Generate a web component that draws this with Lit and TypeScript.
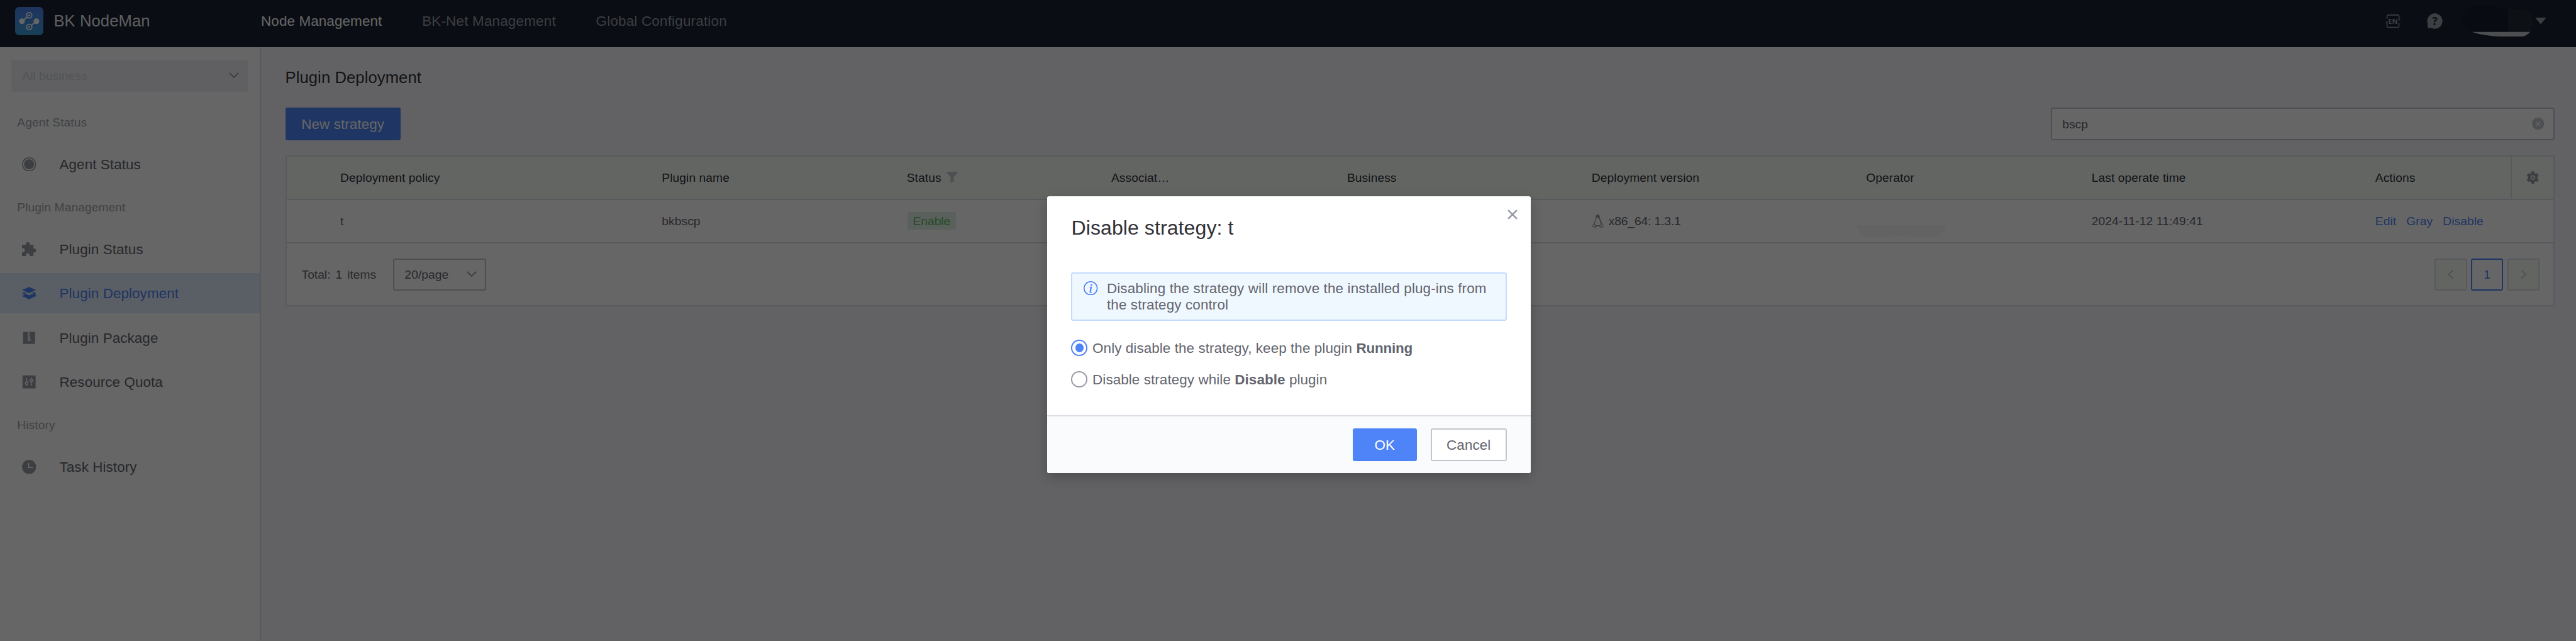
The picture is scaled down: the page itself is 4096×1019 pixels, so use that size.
import { LitElement, html, css, unsafeCSS } from "lit";
import type { TemplateResult } from "lit";
import { customElement } from "lit/decorators.js";

/** Design units are CSS pixels of a 2556px wide layout, enlarged for the wide screen. */
const K = 4096 / 2556;
const u = (n: number) => unsafeCSS(`${+(n * K).toFixed(3)}px`);

const icons = {
  logo: html`<svg viewBox="0 0 28 28"><defs><linearGradient id="lg" x1="0" y1="0" x2="0" y2="1"><stop offset="0" stop-color="#4d82ee"/><stop offset="1" stop-color="#3e9fd8"/></linearGradient></defs><rect width="28" height="28" rx="4" fill="url(#lg)"/><g fill="none" stroke="#fff" stroke-width="1.1"><path d="M7 14.2 12.3 9.8M21 14.2 15.8 18.6" stroke-width="1.3"/><circle cx="14" cy="8.3" r="2.7"/><circle cx="14" cy="20" r="2.7"/></g><g fill="#fff"><circle cx="6.8" cy="14.2" r="2.8"/><circle cx="21.2" cy="14.2" r="2.8"/><circle cx="14" cy="8.3" r="1"/><circle cx="14" cy="20" r="1"/></g></svg>`,
  agent: html`<svg viewBox="0 0 14 14"><circle cx="7" cy="7" r="6.5" fill="none" stroke="currentColor"/><circle cx="7" cy="7" r="5" fill="currentColor"/></svg>`,
  puzzle: html`<svg viewBox="0 0 14 14"><path fill="currentColor" d="M0 2.6H3.9V1.9A1.9 1.9 0 0 1 7.7 1.9V2.6H11.4V6.2H12A2 2 0 0 1 12 10.2H11.4V14H7.6V12.9A1.8 1.8 0 0 0 4 12.9V14H0V10H.7A2 2 0 0 0 .7 6H0Z"/></svg>`,
  layers: html`<svg viewBox="0 0 14 14"><path fill="currentColor" d="M7 .8 14 3.8 7 6.8 0 3.8ZM0 7 2.6 5.8 4 6.4 2.7 7 7 9 11.3 7 10 6.4 11.4 5.8 14 7 12.3 7.8 14 8.7V9.8L7 12.9 0 9.8V9.7L2.6 8.5 1.7 7.8Z"/></svg>`,
  zip: html`<svg viewBox="0 0 14 14"><rect x="1" y="1" width="12" height="12" rx=".5" fill="currentColor"/><path stroke="#fff" stroke-width="1.3" stroke-dasharray="1 .6" d="M6.3 1V7.5"/><path stroke="#fff" stroke-width="1.3" stroke-dasharray="1 .6" d="M7.6 1.8V7.5"/><rect x="6" y="7.7" width="2" height="1.9" fill="none" stroke="#fff" stroke-width=".8"/></svg>`,
  sliders: html`<svg viewBox="0 0 14 14"><rect x=".5" y=".5" width="13" height="13" rx=".5" fill="currentColor"/><g stroke="#fff" stroke-width=".9" fill="none"><path d="M4.7 3V6.8M4.7 9.6V11M9.3 3V4M9.3 6.8V11"/><circle cx="4.7" cy="8.2" r="1.3"/><circle cx="9.3" cy="5.5" r="1.3"/></g></svg>`,
  clock: html`<svg viewBox="0 0 14 14"><circle cx="7" cy="7" r="7" fill="currentColor"/><path d="M6.6 3V7.6H11" fill="none" stroke="#fff" stroke-width="1"/></svg>`,
  down: html`<svg viewBox="0 0 10 6"><path d="M.6.6 5 5 9.4.6" fill="none" stroke="currentColor" stroke-width="1.2"/></svg>`,
  filter: html`<svg viewBox="0 0 11 11"><path fill="currentColor" d="M0 0H11V1L7.2 5V9.5L4 11V5L0 1Z"/></svg>`,
  gear: html`<svg viewBox="0 0 14 14"><path fill="currentColor" d="M5.8.8H8.2L8.6 2.6 9.9 3.3 11.6 2.7 12.9 4.9 11.6 6.2V7.8L12.9 9.1 11.6 11.3 9.9 10.7 8.6 11.4 8.2 13.2H5.8L5.4 11.4 4.1 10.7 2.4 11.3 1.1 9.1 2.4 7.8V6.2L1.1 4.9 2.4 2.7 4.1 3.3 5.4 2.6Z"/><circle cx="7" cy="7" r="1.7" fill="none" stroke="#f8fdf8" stroke-width="1"/></svg>`,
  clear: html`<svg viewBox="0 0 12 12"><circle cx="6" cy="6" r="6" fill="currentColor"/><path d="M3.9 3.9 8.1 8.1M8.1 3.9 3.9 8.1" stroke="#fff" stroke-width=".9"/></svg>`,
  linux: html`<svg viewBox="0 0 11 13"><path d="M3.7 3.5C3.5 1.3 4.2.4 5.3.4S7.1 1.3 7 3.3C7.2 5 9.1 6.6 9.1 9.5L8.4 11H3L2 9.3C2.2 6.6 3.7 5.5 3.7 3.5Z" fill="none" stroke="currentColor" stroke-width=".8"/><path d="M3.7 1.9C4 .3 6.7.3 7 1.9L6.9 3.6C7.3 5.2 9.2 6.8 9.1 9.4L8.2 9.3C8.2 7 6.6 5.5 6.4 3.7L5.5 3.2 3.9 3.8Z" fill="currentColor"/><path d="M.5 12C.4 10.2 1 9.4 2 9.2L4 12.2 2.9 12.7ZM10.6 12C10.6 10.4 9.8 9.5 8.8 9.4L7.2 12.1 8.3 12.7Z" fill="#fff" stroke="currentColor" stroke-width=".7"/></svg>`,
  lang: html`<svg viewBox="0 0 15 15"><path d="M1.6 4.8V2.2Q1.6 1.2 2.6 1.2H12.4Q13.4 1.2 13.4 2.2V4.6M13.4 9V12.4Q13.4 13.4 12.4 13.4H2.6Q1.6 13.4 1.6 12.4V9" fill="none" stroke="currentColor" stroke-width="1"/><path d="M13.1 7.6V4.7H15ZM1.9 6.6V9H0Z" fill="currentColor"/><text x="7.5" y="9.9" text-anchor="middle" font-family="Open Sans, sans-serif" font-weight="700" font-size="7" letter-spacing="0" fill="currentColor">EN</text></svg>`,
  help: html`<svg viewBox="0 0 16 16"><path d="M8 .2A7.8 7.8 0 1 1 5 15.2H.7V10.6A7.8 7.8 0 0 1 8 .2Z" fill="currentColor"/><text x="8" y="12" text-anchor="middle" font-family="Open Sans, sans-serif" font-weight="700" font-size="11" letter-spacing="0" fill="#192132">?</text></svg>`,
  caret: html`<svg viewBox="0 0 11 6.5"><path d="M0 0H11L5.5 6.5Z" fill="currentColor"/></svg>`,
  prev: html`<svg viewBox="0 0 6 9"><path d="M5.2.4 1 4.5 5.2 8.6" fill="none" stroke="currentColor" stroke-width="1.1"/></svg>`,
  next: html`<svg viewBox="0 0 6 9"><path d="M.8.4 5 4.5.8 8.6" fill="none" stroke="currentColor" stroke-width="1.1"/></svg>`,
  close: html`<svg viewBox="0 0 10 10"><path d="M.7.7 9.3 9.3M9.3.7.7 9.3" stroke="currentColor" stroke-width="1.7"/></svg>`,
  info: html`<svg viewBox="0 0 14 14"><circle cx="7" cy="7" r="6.5" fill="none" stroke="currentColor" stroke-width="1"/><text x="7" y="11" text-anchor="middle" font-family="Liberation Serif, serif" font-style="italic" font-size="12" letter-spacing="0" fill="currentColor" stroke="currentColor" stroke-width=".35">i</text></svg>`,
  userMask: html`<svg viewBox="0 0 70 31"><path d="M0 15.5Q1 0 14 0L57 3.7Q70 5 70 16L69 22 67 26H9Q0 23 0 15.5Z" fill="#141c2e"/><path d="M45 2.7 57 3.7Q70 5 70 16L69 22 67 26H45Z" fill="#222b37"/><path d="M9 26H67Q62 31 57 31C40 31 22 30.5 9 26Z" fill="#c0c3c9"/></svg>`,
  nameMask: html`<svg viewBox="0 0 90 12"><path d="M0 0H90Q88 9 80 11.5 72 12 45 11L12 12Q2 9 0 0Z" fill="#f8f8f8"/></svg>`,
};

interface MenuItem {
  icon: TemplateResult;
  label: string;
  active?: boolean;
}

const menu: { title: string; items: MenuItem[] }[] = [
  { title: "Agent Status", items: [{ icon: icons.agent, label: "Agent Status" }] },
  {
    title: "Plugin Management",
    items: [
      { icon: icons.puzzle, label: "Plugin Status" },
      { icon: icons.layers, label: "Plugin Deployment", active: true },
      { icon: icons.zip, label: "Plugin Package" },
      { icon: icons.sliders, label: "Resource Quota" },
    ],
  },
  { title: "History", items: [{ icon: icons.clock, label: "Task History" }] },
];

@customElement("app-root")
export class AppRoot extends LitElement {
  static styles = css`
    :host { display: block; position: relative; width: 4096px; height: 1019px; overflow: hidden;
      font-family: "Liberation Sans", Arial, sans-serif; font-size: ${u(14)}; letter-spacing: ${u(0.05)}; color: #63656e; background: #f5f6fa; }
    * { box-sizing: border-box; }
    svg { display: block; width: 100%; height: 100%; }
    .t { padding-top: 2px; }
    .page { display: flex; flex-direction: column; height: 100%; }
    .top { display: flex; align-items: center; height: ${u(47)}; background: #192132; padding: 0 ${u(29.5)} ${u(5)} ${u(15)}; flex: none; }
    .logo { width: ${u(28)}; height: ${u(28)}; }
    .brand { width: ${u(205.7)}; margin-left: ${u(10.3)}; font-size: ${u(16)}; color: #eaebf0; white-space: nowrap; }
    .nav { display: flex; gap: ${u(39.8)}; color: #979aa4; flex: 1; white-space: nowrap; letter-spacing: ${u(0.12)}; padding-top: 1.4px; }
    .nav .on { color: #fff; letter-spacing: ${u(0.07)}; }
    .tools { display: flex; align-items: center; color: #979ba5; }
    .lang { width: ${u(15)}; height: ${u(15)}; margin-right: ${u(26.5)}; }
    .help { width: ${u(15.6)}; height: ${u(15.6)}; margin-right: ${u(20)}; }
    .user { width: ${u(70)}; height: ${u(31)}; margin-right: ${u(1.7)}; }
    .caret { width: ${u(11)}; height: ${u(6.5)}; }
    .body { display: flex; flex: 1; }
    .side { width: ${u(259)}; background: #fff; border-right: 2px solid #dcdee5; padding-top: ${u(12)}; flex: none; }
    .biz { display: flex; align-items: center; justify-content: space-between; width: ${u(235)}; height: ${u(32)}; margin: 0 0 ${u(8)} ${u(11)};
      padding: 0 ${u(9)} 0 ${u(11)}; background: #f0f0f4; border-radius: ${u(2)}; font-size: ${u(12)}; color: #cdd3dc; }
    .chev { width: ${u(10)}; height: ${u(6)}; color: #979ba5; }
    .group { height: ${u(44)}; display: flex; align-items: center; padding: 2.6px 0 0 ${u(17)}; font-size: ${u(12)}; color: #a2a5ad; }
    .items { display: flex; flex-direction: column; gap: ${u(4)}; }
    .item { display: flex; align-items: center; height: ${u(40)}; padding-left: ${u(22)}; gap: ${u(23)}; color: #63656e; }
    .item .ic { width: ${u(14)}; height: ${u(14)}; color: #979ba5; }
    .item.on { background: #e2ebfc; color: #4e84f8; }
    .item.on .ic { color: #4e84f8; }
    .main { flex: 1; display: flex; flex-direction: column; padding: 0 ${u(21)} 0 ${u(24)}; }
    .title { font-size: ${u(16)}; line-height: ${u(24)}; margin: ${u(18)} 0; color: #313238; }
    .bar { display: flex; justify-content: space-between; margin-bottom: ${u(15)}; }
    .btn { display: flex; align-items: center; justify-content: center; height: ${u(32)}; border-radius: ${u(2)}; background: #4e84f8; color: #fff; }
    .new { width: ${u(114.4)}; }
    .search { display: flex; align-items: center; justify-content: space-between; width: ${u(500)}; height: ${u(32)}; background: #fff;
      border: 2px solid #c4c6cc; border-radius: ${u(2)}; padding: 0 ${u(9.5)} 0 ${u(10)}; font-size: ${u(12)}; }
    .clear { width: ${u(12)}; height: ${u(12)}; color: #c4c6cc; }
    .table { border: 2px solid #dcdee5; border-radius: ${u(2)}; height: ${u(150)}; background: #fff; font-size: ${u(12)}; }
    .row { display: grid; grid-template-columns: ${u(53.4)} ${u(319)} ${u(243)} ${u(203)} ${u(234)} ${u(242.7)} ${u(272.3)} ${u(223.7)} ${u(281.5)} 1fr;
      height: ${u(43)}; border-bottom: 2px solid #dcdee5; align-items: center; white-space: nowrap; }
    .head { background: #f8fdf8; color: #313238; border-radius: ${u(2)} ${u(2)} 0 0; }
    .cell { display: flex; align-items: center; }
    .last { justify-content: space-between; height: 100%; }
    .set { display: flex; align-items: center; justify-content: center; width: ${u(42.5)}; height: 100%; border-left: 2px solid #dcdee5; }
    .gear { width: ${u(14)}; height: ${u(14)}; color: #979ba5; }
    .filter { width: ${u(11)}; height: ${u(11)}; margin-left: ${u(5)}; color: #c4c6cc; }
    .tag { display: flex; align-items: center; justify-content: center; width: ${u(48.4)}; height: ${u(17)}; margin-left: ${u(0.6)}; background: #e2f0e4; border-radius: ${u(2)}; color: #5ebb65; letter-spacing: 0; }
    .arch { letter-spacing: ${u(-0.08)}; }
    .tux { width: ${u(11)}; height: ${u(13)}; margin: 0 ${u(4.8)} 0 ${u(1)}; color: #979ba5; }
    .mask { width: ${u(90)}; height: ${u(12)}; margin: ${u(21)} 0 0 ${u(-10)}; }
    .links { gap: ${u(10)}; color: #4e84f8; }
    .foot { display: flex; align-items: center; height: ${u(62)}; padding: 0 ${u(14)} 0 ${u(15)}; }
    .total { display: flex; gap: ${u(5)}; width: ${u(91)}; letter-spacing: 0; }
    .size { display: flex; align-items: center; justify-content: space-between; width: ${u(92)}; height: ${u(32)}; border: 2px solid #c4c6cc; border-radius: ${u(2)}; padding: 0 ${u(8)} 0 ${u(10)}; }
    .pages { display: flex; gap: ${u(4)}; margin-left: auto; }
    .pg { display: flex; align-items: center; justify-content: center; width: ${u(32)}; height: ${u(32)}; border: 2px solid #dcdee5; border-radius: ${u(2)}; background: #f8fdf8; color: #c4c6cc; }
    .pg.on { background: #fff; border-color: #4e84f8; color: #4e84f8; }
    .arrow { width: ${u(6)}; height: ${u(9)}; }
    .veil { position: absolute; inset: 0; background: rgba(0, 0, 0, .6); }
    .modal { position: absolute; left: ${u(1039)}; top: ${u(195)}; width: ${u(480)}; height: ${u(274)}; background: #fff; border-radius: ${u(2)};
      box-shadow: 0 ${u(4)} ${u(12)} rgba(0, 0, 0, .2); display: flex; flex-direction: column; overflow: hidden; }
    .x { position: absolute; right: ${u(13)}; top: ${u(13)}; width: ${u(10)}; height: ${u(10)}; color: #979ba5; }
    .mtitle { font-size: ${u(20)}; line-height: ${u(26)}; color: #313238; padding: ${u(18.7)} ${u(24)} ${u(30.3)}; }
    .alert { display: flex; gap: ${u(9)}; margin: 0 ${u(24)}; height: ${u(48)}; padding: ${u(7)} ${u(11)}; border: 2px solid #c5daff; border-radius: ${u(2)}; background: #f0f8ff; line-height: ${u(16)}; white-space: nowrap; letter-spacing: ${u(0.08)}; }
    .info { width: ${u(14)}; height: ${u(14)}; margin-top: ${u(0.5)}; color: #4e84f8; flex: none; }
    .radio { display: flex; align-items: center; gap: ${u(5)}; height: ${u(16)}; margin: ${u(19)} ${u(24)} 0; white-space: nowrap; }
    .radio + .radio { margin-top: ${u(15.5)}; }
    .radio b { letter-spacing: ${u(-0.12)}; }
    .radio + .radio b { letter-spacing: ${u(0.05)}; }
    .dot { width: ${u(16)}; height: ${u(16)}; border: 2px solid #979ba5; border-radius: 50%; display: flex; align-items: center; justify-content: center; }
    .dot.on { border-color: #4e84f8; }
    .dot.on::after { content: ""; width: ${u(8.4)}; height: ${u(8.4)}; border-radius: 50%; background: #4e84f8; }
    .mfoot { margin-top: auto; height: ${u(57)}; border-top: 2px solid #dcdee5; background: #fafbfd; display: flex; justify-content: flex-end; gap: ${u(13.5)}; padding: ${u(12)} ${u(24)} 0; }
    .ok { width: ${u(64)}; }
    .cancel { width: ${u(75.5)}; background: #fff; border: 2px solid #c4c6cc; color: #63656e; }
  `;

  private renderSide() {
    return html`<aside class="side">
      <div class="biz"><span class="t">All business</span><span class="chev">${icons.down}</span></div>
      ${menu.map((g) => html`<div class="group">${g.title}</div>
        <div class="items">${g.items.map((i) => html`<div class="item ${i.active ? "on" : ""}"><span class="ic">${i.icon}</span><span class="t">${i.label}</span></div>`)}</div>`)}
    </aside>`;
  }

  private renderTable() {
    return html`<div class="table">
      <div class="row head">
        <div></div><div class="t">Deployment policy</div><div class="t">Plugin name</div>
        <div class="cell"><span class="t">Status</span><span class="filter">${icons.filter}</span></div>
        <div class="t">Associat…</div><div class="t">Business</div><div class="t">Deployment version</div><div class="t">Operator</div><div class="t">Last operate time</div>
        <div class="cell last"><span class="t">Actions</span><span class="set"><span class="gear">${icons.gear}</span></span></div>
      </div>
      <div class="row">
        <div></div><div class="t">t</div><div class="t">bkbscp</div><div><span class="tag"><span class="t">Enable</span></span></div><div></div><div></div>
        <div class="cell arch"><span class="tux">${icons.linux}</span><span class="t">x86_64: 1.3.1</span></div>
        <div><div class="mask">${icons.nameMask}</div></div>
        <div class="t">2024-11-12 11:49:41</div>
        <div class="cell links t"><span>Edit</span><span>Gray</span><span>Disable</span></div>
      </div>
      <div class="foot">
        <div class="total t"><span>Total:</span><span>1</span><span>items</span></div>
        <div class="size"><span class="t">20/page</span><span class="chev">${icons.down}</span></div>
        <div class="pages">
          <span class="pg"><span class="arrow">${icons.prev}</span></span>
          <span class="pg on"><span class="t">1</span></span>
          <span class="pg"><span class="arrow">${icons.next}</span></span>
        </div>
      </div>
    </div>`;
  }

  private renderModal() {
    return html`<div class="modal">
      <span class="x">${icons.close}</span>
      <div class="mtitle">Disable strategy: t</div>
      <div class="alert"><span class="info">${icons.info}</span><div>Disabling the strategy will remove the installed plug-ins from<br />the strategy control</div></div>
      <div class="radio"><span class="dot on"></span><span class="t">Only disable the strategy, keep the plugin <b>Running</b></span></div>
      <div class="radio"><span class="dot"></span><span class="t">Disable strategy while <b>Disable</b> plugin</span></div>
      <div class="mfoot"><div class="btn ok"><span class="t">OK</span></div><div class="btn cancel"><span class="t">Cancel</span></div></div>
    </div>`;
  }

  render() {
    return html`<div class="page">
        <header class="top">
          <span class="logo">${icons.logo}</span><span class="brand">BK NodeMan</span>
          <nav class="nav"><span class="on">Node Management</span><span>BK-Net Management</span><span>Global Configuration</span></nav>
          <div class="tools"><span class="lang">${icons.lang}</span><span class="help">${icons.help}</span><span class="user">${icons.userMask}</span><span class="caret">${icons.caret}</span></div>
        </header>
        <div class="body">
          ${this.renderSide()}
          <main class="main">
            <div class="title">Plugin Deployment</div>
            <div class="bar"><div class="btn new"><span class="t">New strategy</span></div><div class="search"><span class="t">bscp</span><span class="clear">${icons.clear}</span></div></div>
            ${this.renderTable()}
          </main>
        </div>
      </div>
      <div class="veil"></div>
      ${this.renderModal()}`;
  }
}
